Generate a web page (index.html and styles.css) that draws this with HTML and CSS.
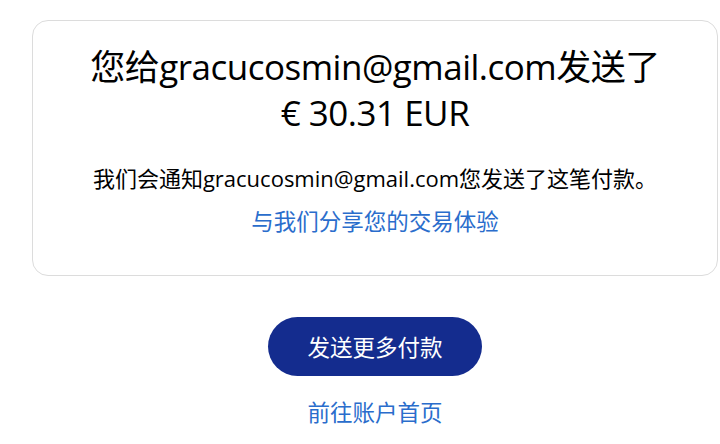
FILE: index.html
```html
<!DOCTYPE html>
<html lang="zh">
<head>
    <meta charset="UTF-8">
    <meta name="viewport" content="width=device-width, initial-scale=1.0">
    <title>付款已发送</title>
    <link rel="stylesheet" href="styles.css">
</head>
<body>
    <div class="page">
        <div class="card">
            <h1 class="title">您给gracucosmin@gmail.com发送了<br>€ 30.31 EUR</h1>
            <p class="note">我们会通知gracucosmin@gmail.com您发送了这笔付款。</p>
            <a class="link" href="#">与我们分享您的交易体验</a>
        </div>
        <div class="actions">
            <a class="btn" href="#">发送更多付款</a>
            <a class="link" href="#">前往账户首页</a>
        </div>
    </div>
</body>
</html>
```

FILE: styles.css
```css
*{
    margin: 0;
    padding: 0;
    box-sizing: border-box;
}
body,html{
    background-color: #fff;
    font-family: "Open Sans", "Noto Sans CJK SC", sans-serif;
    color: #000;
}
.page{
    padding: 20px 2px 0 32px;
}
.card{
    border: 1px solid #dcdcdc;
    border-radius: 16px;
    height: 256px;
    padding-top: 23px;
    display: flex;
    flex-direction: column;
    align-items: center;
    text-align: center;
}
.title{
    font-size: 35px;
    font-weight: 400;
    line-height: 46px;
    letter-spacing: -0.5px;
}
.note{
    font-size: 22px;
    line-height: 30px;
    margin-top: 27px;
    letter-spacing: 0;
}
.link{
    color: #2a6dcc;
    text-decoration: none;
    font-size: 22.5px;
    line-height: 30px;
}
.card .link{
    margin-top: 14px;
}
.actions{
    display: flex;
    flex-direction: column;
    align-items: center;
    padding-top: 41px;
}
.btn{
    background-color: #142c8e;
    color: #fff;
    text-decoration: none;
    font-size: 22.5px;
    width: 214px;
    height: 59px;
    border-radius: 30px;
    display: flex;
    align-items: center;
    justify-content: center;
}
.actions .link{
    margin-top: 22px;
}
```
